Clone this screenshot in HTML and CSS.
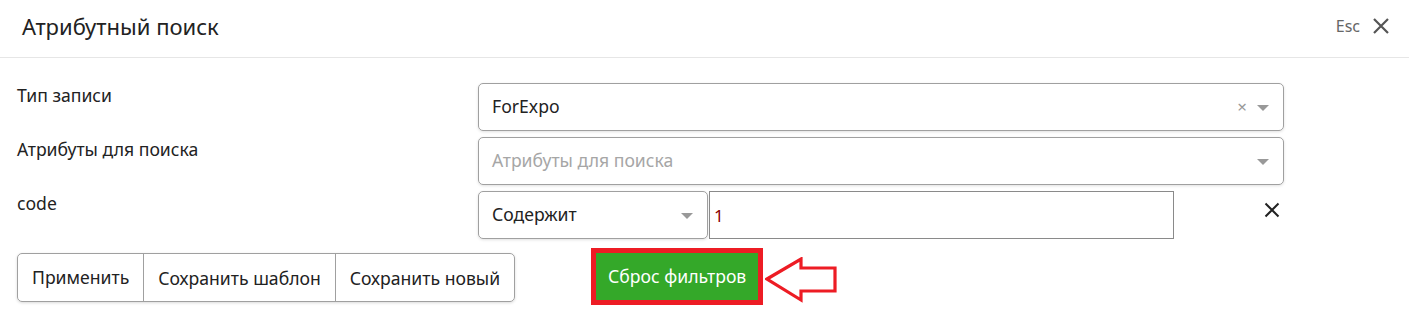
FILE: index.html
```html
<!DOCTYPE html>
<html lang="ru">
<head>
<meta charset="utf-8">
<link rel="stylesheet" href="styles.css">
</head>
<body>
<div class="modal">
  <div class="header">
    <div class="title">Атрибутный поиск</div>
    <div class="esc">Esc
      <svg class="close" width="18" height="18" viewBox="0 0 18 18"><path d="M2 2L16 16M16 2L2 16" stroke="#555" stroke-width="2.2" fill="none"/></svg>
    </div>
  </div>
  <div class="body">
    <div class="form">
      <div class="label">Тип записи</div>
      <div class="field">
        <div class="select">
          <span class="value">ForExpo</span>
          <span class="clear">×</span>
          <span class="caret"></span>
        </div>
      </div>
      <div class="label">Атрибуты для поиска</div>
      <div class="field">
        <div class="select">
          <span class="value placeholder">Атрибуты для поиска</span>
          <span class="caret"></span>
        </div>
      </div>
      <div class="label">code</div>
      <div class="field cond">
        <div class="select small">
          <span class="value">Содержит</span>
          <span class="caret"></span>
        </div>
        <div class="input">1</div>
        <div class="remove">
          <svg width="16" height="16" viewBox="0 0 16 16"><path d="M1.5 1.5L14.5 14.5M14.5 1.5L1.5 14.5" stroke="#222" stroke-width="2" fill="none"/></svg>
        </div>
      </div>
    </div>
    <div class="actions">
      <div class="group">
        <div class="btn">Применить</div>
        <div class="btn">Сохранить шаблон</div>
        <div class="btn">Сохранить новый</div>
      </div>
      <div class="reset-box"><div class="reset">Сброс фильтров</div></div>
      <svg class="arrow" width="76" height="46" viewBox="0 0 76 46"><polygon points="2,22 36,2 36,11 70,11 70,34 36,34 36,43" fill="none" stroke="#ed1c24" stroke-width="3.2" stroke-linejoin="miter"/></svg>
    </div>
  </div>
</div>
</body>
</html>
```
FILE: styles.css
```css
* { box-sizing: border-box; }
html, body { margin: 0; padding: 0; background: #fff; }
body {
  font-family: "Noto Sans", "Open Sans", sans-serif;
  color: #222;
  width: 1409px;
  height: 332px;
  overflow: hidden;
}
.header {
  height: 58px;
  border-bottom: 1px solid #e6e6e6;
  display: flex;
  align-items: center;
  justify-content: space-between;
  padding: 0 19px 0 22px;
}
.title {
  font-size: 22px;
  color: #222;
  margin-top: -6px;
}
.esc {
  display: flex;
  align-items: center;
  gap: 12px;
  font-size: 16px;
  color: #666;
  margin-top: -6px;
}
.body {
  padding: 25px 17px 0 17px;
}
.form {
  display: grid;
  grid-template-columns: 461px 806px;
  row-gap: 6px;
}
.label {
  font-size: 17.6px;
  color: #222;
  padding-top: 0;
  line-height: 24px;
}
.field { height: 48px; display: flex; }
.select {
  flex: 1;
  height: 48px;
  border: 1px solid #a0a0a0;
  border-radius: 5px;
  box-shadow: 0 1px 3px rgba(0,0,0,0.12);
  display: flex;
  align-items: center;
  padding: 0 14px 0 13px;
  font-size: 17.6px;
}
.value { flex: 1; margin-top: -2px; }
.placeholder { color: #a6a6a6; }
.clear {
  color: #999;
  font-size: 17px;
  margin-right: 10px;
  margin-top: -2px;
}
.caret {
  width: 0; height: 0;
  border-left: 6px solid transparent;
  border-right: 6px solid transparent;
  border-top: 6px solid #999;
  margin-top: 2px;
}
.cond { align-items: center; }
.select.small { flex: 0 0 230px; padding-right: 14px; }
.input {
  width: 465px;
  height: 48px;
  border: 1px solid #8a8a8a;
  display: flex;
  align-items: center;
  padding-left: 4px;
  font-size: 17px;
  color: #8b0000;
  margin-left: 1px;
}
.remove {
  flex: 1;
  display: flex;
  justify-content: flex-end;
  padding-right: 4px;
  margin-top: -10px;
}
.actions {
  display: flex;
  align-items: flex-start;
  margin-top: 9px;
}
.group {
  display: flex;
  height: 49px;
  border: 1px solid #a0a0a0;
  border-radius: 5px;
  box-shadow: 0 1px 3px rgba(0,0,0,0.15);
  margin-top: 5px;
}
.btn {
  display: flex;
  align-items: center;
  padding: 0 14px;
  font-size: 17.6px;
  color: #222;
  margin-top: -1px;
}
.btn + .btn { border-left: 1px solid #a0a0a0; margin-top: 0; }
.reset-box {
  margin-left: 76px;
  border: 5px solid #ed1c24;
  height: 57px;
}
.reset {
  background: #34a829;
  color: #fff;
  height: 47px;
  display: flex;
  align-items: center;
  padding: 0 12px 2px;
  font-size: 17.6px;
}
.arrow { margin-left: 2px; margin-top: 9px; }
```
